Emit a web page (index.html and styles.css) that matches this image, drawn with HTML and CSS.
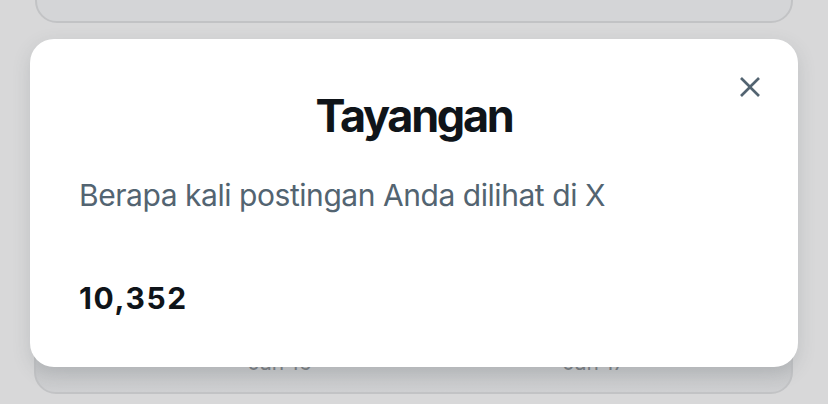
FILE: index.html
```html
<!DOCTYPE html>
<html lang="id">
<head>
<meta charset="utf-8">
<title>Tayangan</title>
<link rel="stylesheet" href="styles.css">
</head>
<body>
<div class="page">
  <div class="card card-top"></div>
  <div class="card card-bottom">
    <div class="axis">
      <span class="axis-label">Jan 16</span>
      <span class="axis-label">Jan 17</span>
    </div>
  </div>
</div>
<div class="modal" role="dialog" aria-labelledby="modal-title">
  <button class="close" aria-label="Tutup">
    <svg viewBox="0 0 24 24" width="32" height="32" aria-hidden="true"><path d="M10.59 12L4.54 5.96l1.42-1.42L12 10.59l6.04-6.05 1.42 1.42L13.41 12l6.05 6.04-1.42 1.42L12 13.41l-6.04 6.05-1.42-1.42L10.59 12z"/></svg>
  </button>
  <h1 class="title" id="modal-title">Tayangan</h1>
  <p class="subtitle">Berapa kali postingan Anda dilihat di X</p>
  <p class="value">10,352</p>
</div>
</body>
</html>
```
FILE: styles.css
```css
html, body {
  margin: 0;
  padding: 0;
}
body {
  width: 828px;
  height: 404px;
  overflow: hidden;
  background: #d8d8d9;
  font-family: Inter, "Noto Sans", sans-serif;
  position: relative;
}
.page {
  display: flex;
  flex-direction: column;
  padding: 0 35px;
}
.card {
  background: #d4d5d7;
  border: 2px solid #c2c3c5;
  border-radius: 22px;
  box-sizing: border-box;
}
.card-top {
  height: 60px;
  margin-top: -37px;
}
.card-bottom {
  height: 118px;
  margin-top: 253px;
  margin-left: -1px;
  display: flex;
  align-items: flex-start;
  background: linear-gradient(#c2c3c5 0, #c6c7c9 90px, #d0d1d3 118px);
}
.axis {
  display: flex;
  padding-top: 70px;
  padding-left: 212px;
  gap: 251px;
}
.axis-label {
  font-size: 21px;
  line-height: 30px;
  color: #7a7e83;
}
.modal {
  position: absolute;
  left: 30px;
  top: 39px;
  width: 768px;
  height: 328px;
  box-sizing: border-box;
  background: #ffffff;
  border-radius: 24px;
  padding: 49px 49px 0;
  box-shadow: 0 6px 18px rgba(80, 86, 94, 0.18);
}
.close {
  position: absolute;
  top: 32px;
  right: 32px;
  width: 32px;
  height: 32px;
  padding: 0;
  border: 0;
  background: none;
  display: flex;
}
.close svg {
  fill: #536471;
}
.title {
  margin: 0;
  text-align: center;
  font-size: 45px;
  line-height: 55px;
  font-weight: 650;
  color: #0f1419;
  letter-spacing: -2.3px;
}
.subtitle {
  margin: 34px 0 0;
  font-size: 30px;
  line-height: 36px;
  color: #536471;
  font-weight: 400;
  letter-spacing: -0.45px;
}
.value {
  margin: 67px 0 0;
  font-size: 30px;
  line-height: 36px;
  font-weight: 700;
  color: #0f1419;
  letter-spacing: 1.6px;
}
```
